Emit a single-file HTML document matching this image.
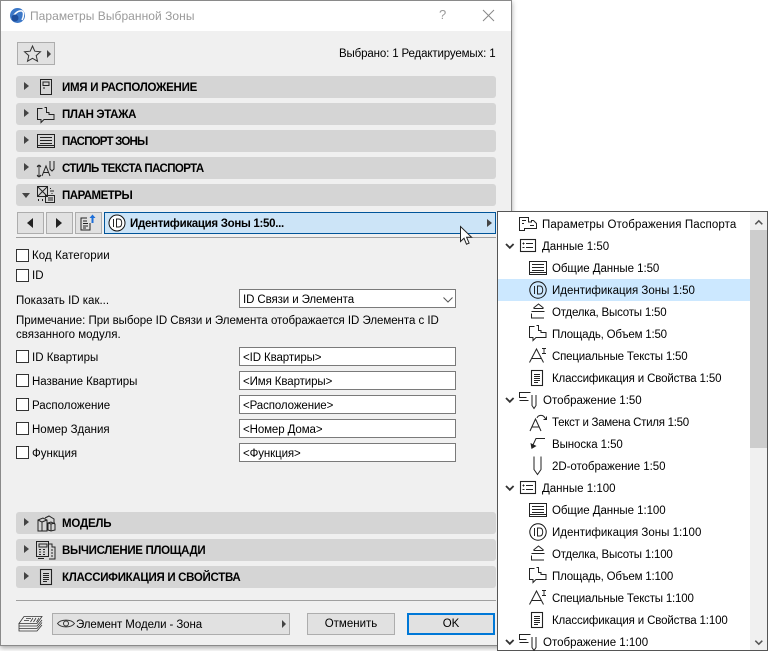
<!DOCTYPE html>
<html lang="ru"><head><meta charset="utf-8"><title>Параметры Выбранной Зоны</title>
<style>
html,body{margin:0;padding:0;background:#fff}
body{width:768px;height:651px;position:relative;overflow:hidden;font:11.5px "Liberation Sans",sans-serif;color:#000}
.a{position:absolute;box-sizing:border-box}
.t{position:absolute;white-space:nowrap;line-height:14px;height:14px;margin-top:1px}
.sec{position:absolute;left:16px;width:480px;height:22px;background:#d5d5d5;border-radius:3px}
.sec b{position:absolute;left:46px;top:5px;font-size:11.5px;line-height:14px;white-space:nowrap;color:#000}
.tri{position:absolute;left:8px;top:6px;width:0;height:0;border-left:5px solid #444;border-top:4.5px solid transparent;border-bottom:4.5px solid transparent}
.cb{position:absolute;left:16px;width:13px;height:13px;background:#fff;border:1px solid #333;box-sizing:border-box}
.inp{position:absolute;left:239px;width:217px;height:19px;background:#fff;border:1px solid #7a7a7a;box-sizing:border-box;padding:3px 0 0 3px;line-height:14px;white-space:nowrap;letter-spacing:-.1px}
.nb{position:absolute;top:212px;width:27px;height:22px;background:#e1e1e1;border:1px solid #adadad;box-sizing:border-box}
svg{position:absolute;overflow:visible}
.ic{fill:none;stroke:#222;stroke-width:1}
.row{position:absolute;white-space:nowrap;line-height:14px;height:14px;margin-top:1px}
</style></head><body>
<svg width="0" height="0" style="position:absolute"><defs>
<g id="passport" class="ic"><rect x=".5" y=".5" width="17" height="13"/><path d="M3 3.500h12M3 6.500h12M3 9.500h12M1 11.500h16"/></g>
<g id="idc" class="ic"><circle cx="9" cy="9" r="8.200" stroke="#111"/><path d="M5.500 5v8M8.500 5v8h2.200c2 0 3-1.600 3-4s-1-4-3-4z"/></g>
<g id="finish" class="ic"><path d="M2.500 5L7.500 1l5 4M2.500 5.500h10M.5 8.500h13M.5 10.500v4.500h12.500"/></g>
<g id="area" class="ic"><path d="M5.500 1.500h-5v11H4v3l3-3h10V7.500h-5V5.500H9.500V.5H7.500"/></g>
<g id="text" class="ic"><path d="M.5 14.500L7.500 1l7 13.500M3 10.500h9"/><path d="M13 .5h4M15 .5v5M13 5.500h4" stroke-width=".9"/></g>
<g id="list" class="ic"><rect x=".5" y=".5" width="11" height="15" stroke-width="1.100"/><path d="M3 4.500h6M3 6.500h6M3 8.500h6M3 10.500h6M3 12.500h4"/></g>
<g id="data" class="ic"><rect x=".5" y=".5" width="15" height="12" stroke-width="1.100"/><path d="M6 4.500h7M6 8.500h7"/><path d="M2.500 4.500h2M2.500 8.500h2M3.500 3.500v2"/></g>
<g id="disp" class="ic"><path d="M11.500.5H.5v5h7M.5 8.500h9"/><path d="M13 3v10.500l2 3 2-3V3"/></g>
<g id="chev" fill="none" stroke="#333" stroke-width="1.800"><path d="M0 0l3.800 3.800L7.600 0"/></g>
</defs></svg>

<!-- Dialog -->
<div class="a" style="left:0;top:0;width:512px;height:646px;background:#f0f0f0;border:1px solid #8a8a8a;box-shadow:0 2px 5px rgba(0,0,0,.35)"></div>
<div class="a" style="left:1px;top:1px;width:510px;height:30px;background:#fff"></div>
<svg style="left:10px;top:8px" width="15" height="15"><circle cx="7.500" cy="7.500" r="7.500" fill="#3c78c8"/><path d="M2 11C4 6 8 2 12 3c2 1 2 5 0 9" fill="none" stroke="#fff" stroke-width="1.500"/><circle cx="5" cy="10" r="3.500" fill="#1f4f9c"/></svg>
<div class="t" style="left:30px;top:8px;color:#9a9a9a;font-size:12px;letter-spacing:.05px">Параметры Выбранной Зоны</div>
<div class="t" style="left:439px;top:7px;color:#9a9a9a;font-size:13px">?</div>
<svg style="left:483px;top:10px" width="11" height="11"><path d="M0 0l11 11M11 0L0 11" stroke="#888" fill="none"/></svg>

<div class="a" style="left:17px;top:42px;width:38px;height:23px;background:#e1e1e1;border:1px solid #adadad"></div>
<svg style="left:24px;top:45px" width="17" height="17"><path d="M8.500 1l2.300 5.200 5.700.6-4.300 3.800 1.300 5.600-5-2.900-5 2.900 1.300-5.600L.5 6.800l5.700-.6z" fill="none" stroke="#333"/></svg>
<div style="position:absolute;left:47px;top:50px;border-left:4px solid #444;border-top:4px solid transparent;border-bottom:4px solid transparent"></div>
<div class="t" style="left:339px;top:46px;color:#000;letter-spacing:-.14px">Выбрано: 1 Редактируемых: 1</div>

<!-- Sections -->
<div class="sec" style="top:76px"><i class="tri"></i><b style="letter-spacing:-.27px">ИМЯ И РАСПОЛОЖЕНИЕ</b></div>
<div class="sec" style="top:103px"><i class="tri"></i><b style="letter-spacing:-.35px">ПЛАН ЭТАЖА</b></div>
<div class="sec" style="top:130px"><i class="tri"></i><b style="letter-spacing:-.8px">ПАСПОРТ ЗОНЫ</b></div>
<div class="sec" style="top:157px"><i class="tri"></i><b style="letter-spacing:-.6px">СТИЛЬ ТЕКСТА ПАСПОРТА</b></div>
<div class="sec" style="top:184px"><i style="position:absolute;left:6px;top:9px;border-top:5px solid #444;border-left:4.500px solid transparent;border-right:4.500px solid transparent"></i><b style="letter-spacing:-.5px">ПАРАМЕТРЫ</b></div>
<div class="sec" style="top:512px"><i class="tri"></i><b style="letter-spacing:-.2px">МОДЕЛЬ</b></div>
<div class="sec" style="top:539px"><i class="tri"></i><b style="letter-spacing:-.33px">ВЫЧИСЛЕНИЕ ПЛОЩАДИ</b></div>
<div class="sec" style="top:566px"><i class="tri"></i><b style="letter-spacing:-.3px">КЛАССИФИКАЦИЯ И СВОЙСТВА</b></div>

<svg style="left:40px;top:79px" width="13" height="16" class="ic"><rect x=".5" y=".5" width="11" height="15"/><rect x="3" y="3" width="6" height="3.500"/><path d="M3 9h2"/></svg>
<svg style="left:37px;top:107px" width="18" height="18"><use href="#area"/></svg>
<svg style="left:37px;top:134px" width="18" height="14"><use href="#passport"/></svg>
<svg style="left:36px;top:160px" width="21" height="17" class="ic"><path d="M1 6h4M3 6v10M1 16h4M1 7l2-2 2 2M1 15l2 2 2-2" stroke-width=".9"/><path d="M6 16L10 6l4 10M7.500 12.500h5"/><path d="M14 1v8l2 2 2-2V1"/></svg>
<svg style="left:37px;top:186px" width="19" height="18" class="ic"><rect x=".5" y=".5" width="10" height="10"/><path d="M.5.500l10 10M10.500.5l-10 10"/><rect x="8.500" y="9.500" width="9" height="7"/><path d="M11 12h5M11 14h5M13.500 2v1M13 5h4M15 7v1"/><path d="M1 14h1M5 14h1" stroke-width="2"/></svg>
<svg style="left:37px;top:515px" width="19" height="17" class="ic"><path d="M1 5l5-2 4 2v11H1zM1 5l4 2v9M5 7l5-2"/><path d="M8 3l4-2 5 3v4M11 8l3-1 4 2v6l-4 1-3-1zM11 8l3 1 4-1M14 9v7"/></svg>
<svg style="left:36px;top:541px" width="20" height="18" class="ic"><rect x=".5" y=".5" width="12" height="15"/><rect x="3" y="3" width="8" height="3"/><path d="M3 8.500h2M7 8.500h2M3 11h2M7 11h2M3 13.500h2M7 13.500h2"/><path d="M13 3h3v3h3v12h-6M15 9h2M15 12h2M15 15h2M2 17.500h6"/></svg>
<svg style="left:40px;top:569px" width="13" height="16"><use href="#list"/></svg>

<!-- Nav -->
<div class="nb" style="left:17px"></div><div style="position:absolute;left:27px;top:218px;border-right:6px solid #222;border-top:5px solid transparent;border-bottom:5px solid transparent"></div>
<div class="nb" style="left:46px"></div><div style="position:absolute;left:56px;top:218px;border-left:6px solid #222;border-top:5px solid transparent;border-bottom:5px solid transparent"></div>
<div class="nb" style="left:75px"></div>
<svg style="left:80px;top:214px" width="17" height="18" class="ic"><path d="M7 4H1v12h9V9M3 7h4M3 9.500h5M3 12h5M3 14h3"/><path d="M12.500 9V2" stroke="#1e6fd9" stroke-width="2"/><path d="M9.500 4l3-3.500 3 3.500z" fill="#1e6fd9" stroke="none"/></svg>
<div class="a" style="left:104px;top:212px;width:392px;height:22px;background:#cce4f7;border:1px solid #005499"></div>
<svg style="left:108px;top:214px" width="18" height="18"><circle cx="9" cy="9" r="8" fill="#fff" stroke="#111"/><path d="M5.500 5v8M8.500 5v8h2.200c2 0 3-1.600 3-4s-1-4-3-4z" fill="none" stroke="#222"/></svg>
<div class="t" style="left:130px;top:216px;font-weight:bold;color:#000;font-size:11.500px;letter-spacing:-.3px">Идентификация Зоны 1:50...</div>
<div style="position:absolute;left:487px;top:219px;border-left:5px solid #444;border-top:4px solid transparent;border-bottom:4px solid transparent"></div>
<div class="a" style="left:16px;top:237px;width:480px;height:1px;background:#a0a0a0"></div>

<!-- Form -->
<div class="cb" style="top:249px"></div><div class="t" style="left:32px;top:248px;letter-spacing:.08px">Код Категории</div>
<div class="cb" style="top:269px"></div><div class="t" style="left:32px;top:268px">ID</div>
<div class="t" style="left:16px;top:293px">Показать ID как...</div>
<div class="inp" style="top:289px">ID Связи и Элемента</div>
<svg style="left:443px;top:297px" width="10" height="6"><path d="M.5.500l4.500 4.500L9.500.500" fill="none" stroke="#555"/></svg>
<div class="t" style="left:16px;top:313px;letter-spacing:-.04px">Примечание: При выборе ID Связи и Элемента отображается ID Элемента с ID</div>
<div class="t" style="left:16px;top:327px">связанного модуля.</div>
<div class="cb" style="top:350px"></div><div class="t" style="left:32px;top:350px">ID Квартиры</div><div class="inp" style="top:347px">&lt;ID Квартиры&gt;</div>
<div class="cb" style="top:374px"></div><div class="t" style="left:32px;top:374px;letter-spacing:-.05px">Название Квартиры</div><div class="inp" style="top:371px">&lt;Имя Квартиры&gt;</div>
<div class="cb" style="top:398px"></div><div class="t" style="left:32px;top:398px">Расположение</div><div class="inp" style="top:395px">&lt;Расположение&gt;</div>
<div class="cb" style="top:422px"></div><div class="t" style="left:32px;top:422px">Номер Здания</div><div class="inp" style="top:419px">&lt;Номер Дома&gt;</div>
<div class="cb" style="top:446px"></div><div class="t" style="left:32px;top:446px">Функция</div><div class="inp" style="top:443px">&lt;Функция&gt;</div>

<!-- Footer -->
<div class="a" style="left:16px;top:600px;width:480px;height:1px;background:#a0a0a0"></div>
<svg style="left:18px;top:616px" width="25" height="16" fill="none" stroke="#333" stroke-width=".8"><path d="M6 .5h18l-5 7H1zM1 7.500v2.500h18l5-6M1 10v2.500h18l5-6M1 12.500V15h18l5-6"/><path d="M8 2.500h5M6 4.500h5M15 2l-2.500 4M18 2l-2.500 4M21 2l-2.500 4"/></svg>
<div class="a" style="left:52px;top:613px;width:238px;height:22px;background:#e1e1e1;border:1px solid #adadad"></div>
<svg style="left:57px;top:618px" width="18" height="11"><path d="M.5 5.500C4 1 14 1 17.500 5.500 14 10 4 10 .5 5.500z" fill="none" stroke="#333"/><circle cx="9" cy="5.500" r="2.500" fill="none" stroke="#333"/></svg>
<div class="t" style="left:76px;top:617px;letter-spacing:-.1px">Элемент Модели - Зона</div>
<div style="position:absolute;left:282px;top:620px;border-left:4px solid #444;border-top:4px solid transparent;border-bottom:4px solid transparent"></div>
<div class="a" style="left:307px;top:613px;width:88px;height:22px;background:#e1e1e1;border:1px solid #adadad;text-align:center;line-height:21px;color:#000">Отменить</div>
<div class="a" style="left:407px;top:613px;width:88px;height:22px;background:#e1e1e1;border:2px solid #0078d7;text-align:center;line-height:19px;color:#000">OK</div>

<!-- Popup -->
<div class="a" style="left:497px;top:211px;width:271px;height:440px;background:#fff;border:1px solid #555"></div>
<div class="a" style="left:750px;top:212px;width:17px;height:438px;background:#f0f0f0"></div>
<div class="a" style="left:750px;top:230px;width:17px;height:218px;background:#cdcdcd"></div>
<svg style="left:755px;top:220px" width="8" height="5"><path d="M.3 4.300L3.800.8l3.500 3.500" fill="none" stroke="#555" stroke-width="1.500"/></svg>
<svg style="left:755px;top:640px" width="8" height="5"><path d="M.3.700L3.800 4.200 7.300.700" fill="none" stroke="#555" stroke-width="1.500"/></svg>
<div class="a" style="left:498px;top:279px;width:252px;height:22px;background:#cce8ff"></div>

<svg style="left:519px;top:217px" width="19" height="15" class="ic"><path d="M.5 13.500V.5h9V5h3V3.500h2l3 3v5h-12v2z"/><path d="M3 3.500h4M3 6.500h2M11 8.500h4"/></svg>
<div class="row" style="left:542px;top:217px;letter-spacing:.1px">Параметры Отображения Паспорта</div>
<svg style="left:506px;top:244px" width="8" height="5"><use href="#chev"/></svg>
<svg style="left:520px;top:239px" width="16" height="14"><use href="#data"/></svg>
<div class="row" style="left:542px;top:239px">Данные 1:50</div>
<svg style="left:529px;top:261px" width="18" height="14"><use href="#passport"/></svg>
<div class="row" style="left:552px;top:261px;letter-spacing:-.05px">Общие Данные 1:50</div>
<svg style="left:529px;top:281px" width="18" height="18"><use href="#idc"/></svg>
<div class="row" style="left:552px;top:283px">Идентификация Зоны 1:50</div>
<svg style="left:531px;top:303px" width="15" height="16"><use href="#finish"/></svg>
<div class="row" style="left:552px;top:305px;letter-spacing:-.2px">Отделка, Высоты 1:50</div>
<svg style="left:529px;top:325px" width="18" height="18"><use href="#area"/></svg>
<div class="row" style="left:552px;top:327px;letter-spacing:-.2px">Площадь, Объем 1:50</div>
<svg style="left:529px;top:348px" width="19" height="16"><use href="#text"/></svg>
<div class="row" style="left:552px;top:349px;letter-spacing:-.2px">Специальные Тексты 1:50</div>
<svg style="left:531px;top:370px" width="13" height="16"><use href="#list"/></svg>
<div class="row" style="left:552px;top:371px;letter-spacing:-.14px">Классификация и Свойства 1:50</div>
<svg style="left:506px;top:398px" width="8" height="5"><use href="#chev"/></svg>
<svg style="left:519px;top:392px" width="18" height="18"><use href="#disp"/></svg>
<div class="row" style="left:543px;top:393px">Отображение 1:50</div>
<svg style="left:529px;top:414px" width="20" height="18" class="ic"><path d="M1 17L6.500 5 12 17M3 13h7"/><path d="M8 4c1-3 6-4 8 0l1 1M17.500 2.500V5.500h-3"/></svg>
<div class="row" style="left:552px;top:415px;letter-spacing:-.28px">Текст и Замена Стиля 1:50</div>
<svg style="left:530px;top:438px" width="16" height="12"><path d="M15 .5H6L2 9" fill="none" stroke="#222"/><path d="M.5 5l1 6 5-3z" fill="#222"/></svg>
<div class="row" style="left:552px;top:437px;letter-spacing:-.08px">Выноска 1:50</div>
<svg style="left:533px;top:456px" width="10" height="20" class="ic"><path d="M1 .5v13l3.500 5 3.500-5V.5"/></svg>
<div class="row" style="left:552px;top:459px;letter-spacing:-.05px">2D-отображение 1:50</div>
<svg style="left:506px;top:486px" width="8" height="5"><use href="#chev"/></svg>
<svg style="left:520px;top:481px" width="16" height="14"><use href="#data"/></svg>
<div class="row" style="left:542px;top:481px">Данные 1:100</div>
<svg style="left:529px;top:503px" width="18" height="14"><use href="#passport"/></svg>
<div class="row" style="left:552px;top:503px;letter-spacing:-.05px">Общие Данные 1:100</div>
<svg style="left:529px;top:523px" width="18" height="18"><use href="#idc"/></svg>
<div class="row" style="left:552px;top:525px">Идентификация Зоны 1:100</div>
<svg style="left:531px;top:545px" width="15" height="16"><use href="#finish"/></svg>
<div class="row" style="left:552px;top:547px;letter-spacing:-.2px">Отделка, Высоты 1:100</div>
<svg style="left:529px;top:567px" width="18" height="18"><use href="#area"/></svg>
<div class="row" style="left:552px;top:569px;letter-spacing:-.2px">Площадь, Объем 1:100</div>
<svg style="left:529px;top:590px" width="19" height="16"><use href="#text"/></svg>
<div class="row" style="left:552px;top:591px;letter-spacing:-.2px">Специальные Тексты 1:100</div>
<svg style="left:531px;top:612px" width="13" height="16"><use href="#list"/></svg>
<div class="row" style="left:552px;top:613px;letter-spacing:-.14px">Классификация и Свойства 1:100</div>
<svg style="left:506px;top:640px" width="8" height="5"><use href="#chev"/></svg>
<svg style="left:519px;top:634px" width="18" height="17"><use href="#disp"/></svg>
<div class="row" style="left:543px;top:635px">Отображение 1:100</div>

<!-- Cursor -->
<svg style="left:460px;top:226px" width="14" height="20"><path d="M.5.500v15l3.500-3.300 2.500 6 2.600-1.100-2.500-5.800h5z" fill="#fff" stroke="#222"/></svg>
</body></html>
